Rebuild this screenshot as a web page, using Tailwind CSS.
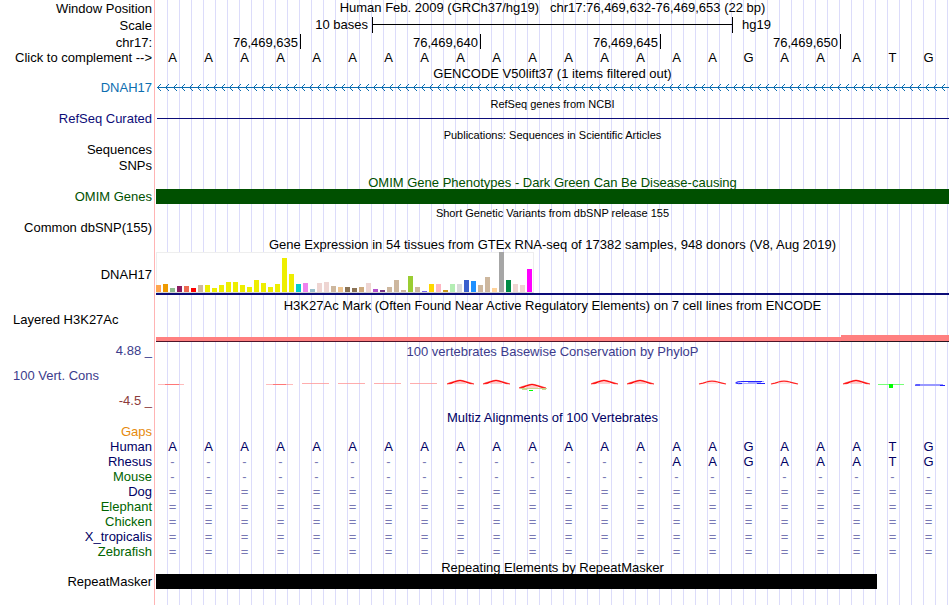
<!DOCTYPE html>
<html lang="en">
<head>
    <meta charset="UTF-8">
    <title>Human chr17:76,469,632-76,469,653 | Genome Browser</title>
    <script src="https://cdn.jsdelivr.net/npm/@tailwindcss/browser@4"></script>
</head>
<body class="bg-white text-black">

    <main class="relative pb-4 font-['Liberation_Sans',Arial,sans-serif] text-[13px] leading-[15px] whitespace-nowrap">

        <!-- guide lines behind all tracks -->
        <div class="absolute inset-y-0 left-[154px] right-0 border-l border-[#ffb4b4] pl-px pr-[2px]">
            <div id="guides" class="flex h-full"></div>
        </div>

        <div class="relative">

            <!-- position, scale and ruler -->
            <div class="flex h-[17px]">
                <div class="w-[154px] shrink-0 pr-[2px] text-right leading-[17px]">Window Position</div>
                <h1 class="ml-[2px] mr-px flex-1 text-center whitespace-pre">Human Feb. 2009 (GRCh37/hg19)   chr17:76,469,632-76,469,653 (22 bp)</h1>
            </div>
            <div class="flex h-[17px]">
                <div class="w-[154px] shrink-0 pr-[2px] text-right leading-[17px]">Scale</div>
                <div class="ml-[2px] mr-[2px] grid flex-1 grid-cols-[repeat(22,minmax(0,1fr))]">
                    <span class="col-span-6 pr-1 text-right">10 bases</span>
                    <div class="col-span-10 -mr-px h-4 border-x border-black">
                        <div class="h-2 border-b border-black"></div>
                    </div>
                    <span class="col-span-6 pl-2.5">hg19</span>
                </div>
            </div>
            <div class="flex h-4">
                <div class="w-[154px] shrink-0 pr-[2px] text-right leading-[17px]">chr17:</div>
                <div class="ml-[2px] mr-[2px] grid flex-1 grid-cols-[repeat(22,minmax(0,1fr))] text-right leading-[17px]">
                    <span class="col-span-4 -mr-px h-[15px] border-r border-black pr-[2px]">76,469,635</span>
                    <span class="col-span-5 -mr-px h-[15px] border-r border-black pr-[2px]">76,469,640</span>
                    <span class="col-span-5 -mr-px h-[15px] border-r border-black pr-[2px]">76,469,645</span>
                    <span class="col-span-5 -mr-px h-[15px] border-r border-black pr-[2px]">76,469,650</span>
                </div>
            </div>
            <div class="flex h-4">
                <button id="complement" class="block h-[15px] w-[154px] shrink-0 pr-[2px] text-right">Click to complement --&gt;</button>
                <div id="bases" class="ml-[2px] mr-[2px] grid flex-1 grid-cols-[repeat(22,minmax(0,1fr))] text-center" data-seq="AAAAAAAAAAAAAAAAGAAATG"></div>
            </div>

            <!-- GENCODE -->
            <h2 class="ml-[156px] mr-px h-[14px] text-center">GENCODE V50lift37 (1 items filtered out)</h2>
            <div class="flex h-4">
                <a href="#" class="w-[154px] shrink-0 pr-[2px] text-right text-[#0c6eb0]">DNAH17</a>
                <svg class="ml-[2px] mr-px h-[15px] min-w-0 flex-1" shape-rendering="crispEdges">
                    <defs>
                        <pattern id="strand" width="8" height="15" patternUnits="userSpaceOnUse">
                            <path d="M1 7h1v1h-1zM2 6h1v1h-1zM2 8h1v1h-1zM3 5h1v1h-1zM3 9h1v1h-1zM4 4h1v1h-1zM4 10h1v1h-1z" fill="#0c6eb0"/>
                        </pattern>
                    </defs>
                    <rect width="100%" height="15" fill="url(#strand)"/>
                    <rect x="1" y="7" width="100%" height="1" fill="#0c6eb0"/>
                </svg>
            </div>

            <!-- RefSeq -->
            <h2 class="ml-[156px] mr-px h-[15px] text-center text-[11px] leading-[17px]">RefSeq genes from NCBI</h2>
            <div class="flex h-4">
                <a href="#" class="w-[154px] shrink-0 pr-[2px] text-right text-[#0c0c78]">RefSeq Curated</a>
                <div class="ml-[3px] mr-px h-2 flex-1 border-b border-[#0c0c78]"></div>
            </div>

            <!-- Publications -->
            <h2 class="ml-[156px] mr-px h-[15px] text-center text-[11px] leading-[17px]">Publications: Sequences in Scientific Articles</h2>
            <div class="h-4 w-[154px] pr-[2px] text-right"><a href="#">Sequences</a></div>
            <div class="h-[17px] w-[154px] pr-[2px] text-right"><a href="#">SNPs</a></div>

            <!-- OMIM -->
            <h2 class="ml-[156px] mr-px h-[14px] text-center text-[#005000]">OMIM Gene Phenotypes - Dark Green Can Be Disease-causing</h2>
            <div class="flex h-4">
                <a href="#" class="w-[154px] shrink-0 pr-[2px] text-right text-[#005000]">OMIM Genes</a>
                <div class="ml-[2px] mr-px h-[15px] flex-1 bg-[#005000]"></div>
            </div>

            <!-- dbSNP -->
            <h2 class="ml-[156px] mr-px h-[15px] text-center text-[11px] leading-[17px]">Short Genetic Variants from dbSNP release 155</h2>
            <div class="h-[17px] w-[154px] pr-[2px] text-right"><a href="#">Common dbSNP(155)</a></div>

            <!-- GTEx -->
            <h2 class="ml-[156px] mr-px h-[15px] text-center">Gene Expression in 54 tissues from GTEx RNA-seq of 17382 samples, 948 donors (V8, Aug 2019)</h2>
            <div class="flex h-[46px]">
                <a href="#" class="w-[154px] shrink-0 pt-[15px] pr-[2px] text-right">DNAH17</a>
                <div class="ml-[2px] mr-px flex-1">
                    <div class="h-[41px] w-[378px] border border-[#eeeeee] border-b-[#d4d4d4] bg-white">
                        <div id="gtex" class="-mt-px -ml-px flex h-10 items-end gap-[2px]"></div>
                    </div>
                    <div class="h-[2px] bg-[#0c0c78]"></div>
                </div>
            </div>

            <!-- H3K27Ac -->
            <h2 class="ml-[156px] mr-px h-[15px] text-center">H3K27Ac Mark (Often Found Near Active Regulatory Elements) on 7 cell lines from ENCODE</h2>
            <div class="flex h-[30px]">
                <a href="#" class="w-[154px] shrink-0 pl-[13px] leading-[13px]">Layered H3K27Ac</a>
                <div class="ml-[2px] mr-px grid flex-1 grid-cols-[repeat(22,minmax(0,1fr))] items-end pb-px">
                    <div class="col-span-19 h-[5px] border-b border-[#501428] bg-[#ff8080]"></div>
                    <div class="col-span-3 h-[7px] border-b border-[#28141e] bg-[#ff8080]"></div>
                </div>
            </div>

            <!-- PhyloP conservation -->
            <div class="flex h-[17px]">
                <div class="w-[154px] shrink-0 pr-[2px] text-right text-[#3c3c8c]">4.88 _</div>
                <h2 class="ml-[2px] mr-px flex-1 text-center leading-[17px] text-[#3c3c8c]">100 vertebrates Basewise Conservation by PhyloP</h2>
            </div>
            <div class="flex h-[50px]">
                <div class="flex w-[154px] shrink-0 flex-col gap-2.5 pt-2 pr-[2px]">
                    <a href="#" class="pl-[13px] text-[#3c3c8c]">100 Vert. Cons</a>
                    <span class="text-right text-[#8c3c3c]">-4.5 _</span>
                </div>
                <svg class="ml-[2px] mr-px h-[50px] min-w-0 flex-1" viewBox="0 0 793 50" preserveAspectRatio="none" fill="none">
                    <defs>
                        <g id="peak">
                            <path d="M0 4.500 2 3.400 10 1.100Q13 0 16 1.100L24 3.400 27 4.500 23 4.200 16 1.900Q13 1 10 1.900L4 4.200z" fill="#f00" stroke="#f00" stroke-width=".5"/>
                            <path d="M7 3.500h12" stroke="#f99" stroke-width="1"/>
                        </g>
                        <g id="lowpeak">
                            <path d="M0 3.500 4 2.600 10 .900Q13 .300 16 .900L23 2.600 27 3.500" stroke="#f22" stroke-width="1.200"/>
                            <path d="M7 2.500h12" stroke="#fbb" stroke-width=".8"/>
                        </g>
                    </defs>
                    <g stroke="#f77">
                        <path d="M2 24.500h26M110 24.500h27" stroke-opacity=".5"/>
                        <path d="M9 24.500h14M117 24.500h13"/>
                    </g>
                    <g stroke="#f99" stroke-opacity=".8">
                        <path d="M146 23.500h27M182 23.500h27M218 23.500h27M254 23.500h27"/>
                    </g>
                    <use href="#peak" x="291" y="19.500"/>
                    <use href="#peak" x="327" y="19.500"/>
                    <use href="#peak" x="363" y="23.500"/>
                    <path d="M364 28.500h27M366 29.500h5M386 29.500h4" stroke="#bc7" stroke-opacity=".8"/>
                    <path d="M373 30.500h4" stroke="#0f0"/>
                    <use href="#peak" x="435" y="19.500"/>
                    <use href="#peak" x="471" y="19.500"/>
                    <use href="#lowpeak" x="543" y="20.500"/>
                    <path d="M608 21.500h-18q-10 0-11 1.500 2 1 10 .500M608 23.500h-19M592 22.500h13" stroke="#aaf"/>
                    <path d="M606 21.500h-18q-8 0-8 1.500 2 1 6 .500M601 23.500h8" stroke="#22f"/>
                    <use href="#lowpeak" x="615" y="20.500"/>
                    <use href="#peak" x="687" y="19.500"/>
                    <path d="M722 24.500h26" stroke="#7f7"/>
                    <path d="M733 24h4v4h-4z" fill="#0f0"/>
                    <path d="M760 24.500h27M759 25.500h30" stroke="#99f"/>
                    <path d="M759 25h5M784 25.500h5" stroke="#22f"/>
                </svg>
            </div>

            <!-- Multiz alignment -->
            <h2 class="ml-[156px] mr-px h-[14px] text-center text-[#000064]">Multiz Alignments of 100 Vertebrates</h2>
            <div class="h-[15px] w-[154px] pr-[2px] text-right text-[#e68a0c]">Gaps</div>
            <div class="pr-[2px]">
                <table class="w-full table-fixed border-collapse">
                    <colgroup>
                        <col class="w-[156px]">
                    </colgroup>
                    <tbody id="multiz"></tbody>
                </table>
            </div>

            <!-- RepeatMasker -->
            <h2 class="mt-px ml-[156px] mr-px h-[14px] text-center">Repeating Elements by RepeatMasker</h2>
            <div class="flex h-[15px]">
                <a href="#" class="w-[154px] shrink-0 pr-[2px] text-right">RepeatMasker</a>
                <div class="ml-[2px] mr-px grid flex-1 grid-cols-[repeat(22,minmax(0,1fr))]">
                    <div class="col-span-20 bg-black"></div>
                </div>
            </div>
        </div>
    </main>

    <script>
        // three guide lines per base
        document.getElementById("guides").innerHTML = '<div class="flex-1 border-r border-[#dcdcfa]"></div>'.repeat(66);

        // reference bases
        const bases = document.getElementById("bases");
        const pairs = { A: "T", T: "A", C: "G", G: "C" };

        function showBases() {
            bases.innerHTML = [...bases.dataset.seq].map(b => `<span class="pr-[3px]">${b}</span>`).join("");
        }

        showBases();

        document.getElementById("complement").addEventListener("click", () => {
            bases.dataset.seq = [...bases.dataset.seq].map(b => pairs[b]).join("");
            showBases();
        });

        // GTEx tissues: height in px, colour
        const tissues = [
            [7, "#ffa54f"], [8, "#ee9a00"], [4, "#8fbc8f"], [6, "#8b1c62"], [6, "#ee6a50"], [4, "#ff0000"],
            [7, "#cdb79e"], [7, "#eeee00"], [4, "#eeee00"], [7, "#eeee00"], [10, "#eeee00"], [10, "#eeee00"],
            [7, "#eeee00"], [5, "#eeee00"], [12, "#eeee00"], [9, "#eeee00"], [5, "#eeee00"], [8, "#eeee00"],
            [34, "#eeee00"], [18, "#eeee00"], [8, "#00cdcd"], [9, "#ee82ee"], [3, "#9ac0cd"], [9, "#eed5d2"],
            [10, "#eed5d2"], [6, "#cdb79e"], [5, "#eec591"], [5, "#8b7355"], [4, "#8b7355"], [5, "#cdaa7d"],
            [9, "#eed5d2"], [3, "#b452cd"], [2, "#7a378b"], [5, "#cdb79e"], [12, "#cdb79e"], [2, "#cdb79e"],
            [16, "#9acd32"], [5, "#cdb79e"], [1, "#7a67ee"], [8, "#ffd700"], [8, "#ffb6c1"], [2, "#cd9b1d"],
            [8, "#b4eeb4"], [8, "#d9d9d9"], [12, "#3a5fcd"], [11, "#1e90ff"], [7, "#cdb79e"], [15, "#cdb79e"],
            [4, "#ffd39b"], [40, "#a6a6a6"], [12, "#008b45"], [8, "#eed5d2"], [7, "#eed5d2"], [23, "#ff00ff"]
        ];
        document.getElementById("gtex").innerHTML = tissues.map(([h, c]) =>
            `<div class="w-[5px] shrink-0" style="height:${h}px;background:${c}"></div>`).join("");

        // alignment rows
        const navy = "text-[#000064]";
        const green = "text-[#006400]";
        const species = [
            ["Human", navy, "AAAAAAAAAAAAAAAAGAAATG"],
            ["Rhesus", navy, "--------------AAGAAATG"],
            ["Mouse", green, "-".repeat(22)],
            ["Dog", navy, "=".repeat(22)],
            ["Elephant", green, "=".repeat(22)],
            ["Chicken", green, "=".repeat(22)],
            ["X_tropicalis", navy, "=".repeat(22)],
            ["Zebrafish", green, "=".repeat(22)]
        ];
        document.getElementById("multiz").innerHTML = species.map(([name, color, seq]) =>
            `<tr class="h-[15px]"><th scope="row" class="p-0 pr-1 text-right font-normal ${color}">${name}</th>` +
            [...seq].map(b => `<td class="p-0 pr-[3px] text-center ${/[-=]/.test(b) ? "text-[#7878b4]" : navy}">${b}</td>`).join("") +
            "</tr>").join("");
    </script>
</body>
</html>
